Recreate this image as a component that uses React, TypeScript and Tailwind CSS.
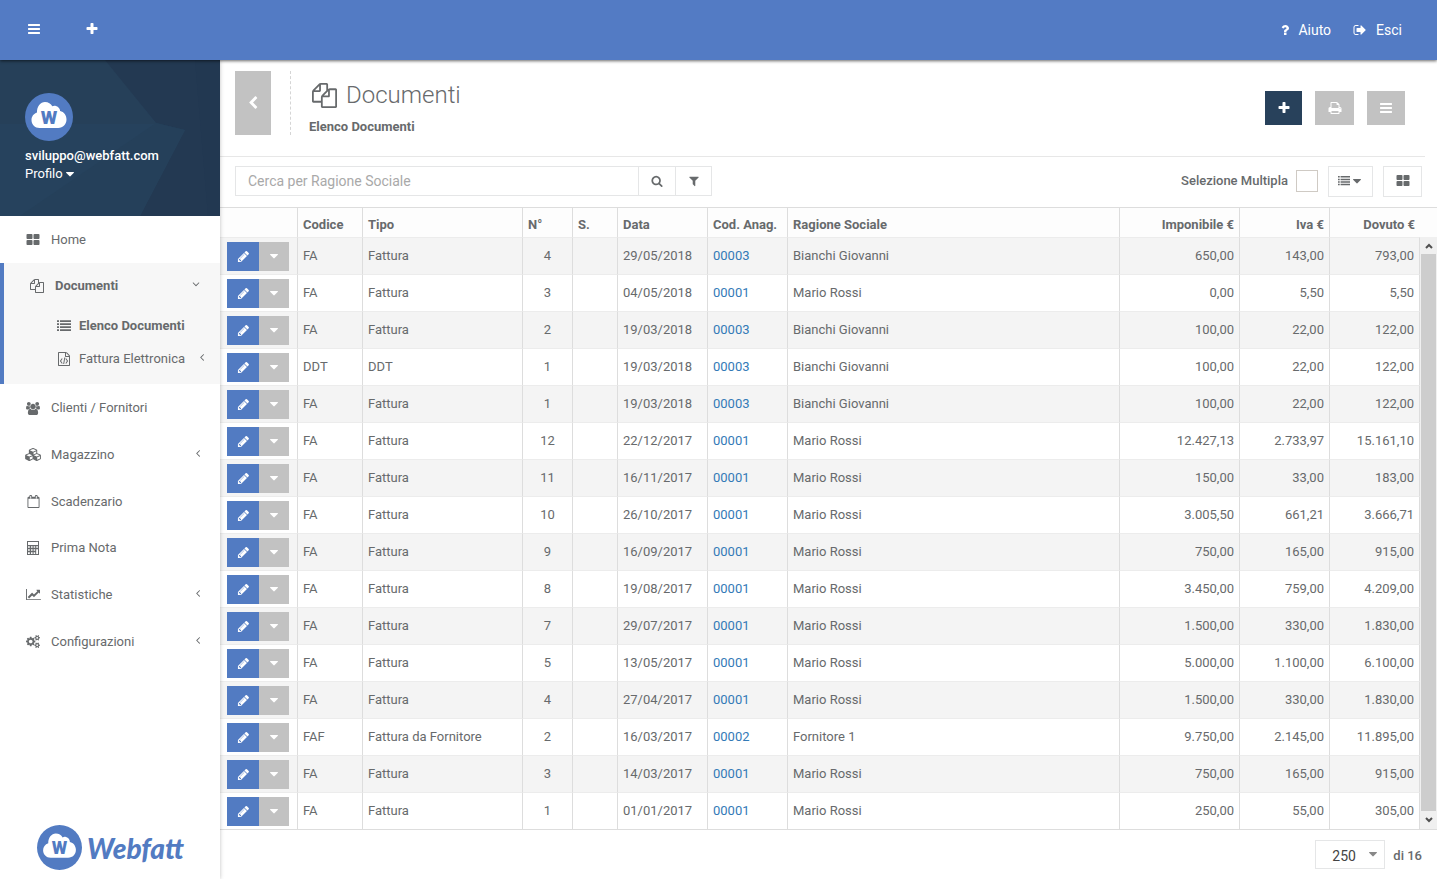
import React from "react";

const paths = {
  bars: "M1664 1344v128q0 26-19 45t-45 19h-1408q-26 0-45-19t-19-45v-128q0-26 19-45t45-19h1408q26 0 45 19t19 45zm0-512v128q0 26-19 45t-45 19h-1408q-26 0-45-19t-19-45v-128q0-26 19-45t45-19h1408q26 0 45 19t19 45zm0-512v128q0 26-19 45t-45 19h-1408q-26 0-45-19t-19-45v-128q0-26 19-45t45-19h1408q26 0 45 19t19 45z",
  plus: "M1600 736v192q0 40-28 68t-68 28h-416v416q0 40-28 68t-68 28h-192q-40 0-68-28t-28-68v-416h-416q-40 0-68-28t-28-68v-192q0-40 28-68t68-28h416v-416q0-40 28-68t68-28h192q40 0 68 28t28 68v416h416q40 0 68 28t28 68z",
  files: "M1696 384q40 0 68 28t28 68v1216q0 40-28 68t-68 28h-960q-40 0-68-28t-28-68v-288h-544q-40 0-68-28t-28-68v-672q0-40 20-88t48-76l408-408q28-28 76-48t88-20h416q40 0 68 28t28 68v328q68-40 128-40h416zm-544 213l-299 299h299v-299zm-640-384l-299 299h299v-299zm196 647l316-316v-416h-384v416q0 40-28 68t-68 28h-416v640h512v-256q0-40 20-88t48-76zm956 804v-1152h-384v416q0 40-28 68t-68 28h-416v640h896z",
  pencil: "M491 1536l91-91-235-235-91 91v107h128v128h107zm523-928q0-22-22-22-10 0-17 7l-542 542q-7 7-7 17 0 22 22 22 10 0 17-7l542-542q7-7 7-17zm-54-192l416 416-832 832h-416v-416zm683 96q0 53-37 90l-166 166-416-416 166-165q36-38 90-38 53 0 91 38l235 234q37 39 37 91z",
  thLarge: "M832 1024v384q0 52-38 90t-90 38h-512q-52 0-90-38t-38-90v-384q0-52 38-90t90-38h512q52 0 90 38t38 90zm0-768v384q0 52-38 90t-90 38h-512q-52 0-90-38t-38-90v-384q0-52 38-90t90-38h512q52 0 90 38t38 90zm896 768v384q0 52-38 90t-90 38h-512q-52 0-90-38t-38-90v-384q0-52 38-90t90-38h512q52 0 90 38t38 90zm0-768v384q0 52-38 90t-90 38h-512q-52 0-90-38t-38-90v-384q0-52 38-90t90-38h512q52 0 90 38t38 90z",
  list: "M0 1312h256v224h-256zM0 928h256v224h-256zM0 544h256v224h-256zM0 160h256v224h-256zM384 1312h1408v224h-1408zM384 928h1408v224h-1408zM384 544h1408v224h-1408zM384 160h1408v224h-1408z",
  angleLeft: "M1203 544q0 13-10 23l-393 393 393 393q10 10 10 23t-10 23l-50 50q-10 10-23 10t-23-10l-466-466q-10-10-10-23t10-23l466-466q10-10 23-10t23 10l50 50q10 10 10 23z",
  angleDown: "M1395 736q0 13-10 23l-466 466q-10 10-23 10t-23-10l-466-466q-10-10-10-23t10-23l50-50q10-10 23-10t23 10l393 393 393-393q10-10 23-10t23 10l50 50q10 10 10 23z",
  chevronLeft: "M1427 301l-531 531 531 531q19 19 19 45t-19 45l-166 166q-19 19-45 19t-45-19l-742-742q-19-19-19-45t19-45l742-742q19-19 45-19t45 19l166 166q19 19 19 45t-19 45z",
  print: "M448 1536h896v-256h-896v256zm0-640h896v-384h-160q-40 0-68-28t-28-68v-160h-640v640zm1152 64q0-26-19-45t-45-19-45 19-19 45 19 45 45 19 45-19 19-45zm128 0v416q0 13-9.5 22.5t-22.5 9.5h-224v160q0 40-28 68t-68 28h-960q-40 0-68-28t-28-68v-160h-224q-13 0-22.5-9.5t-9.5-22.5v-416q0-79 56.5-135.5t135.5-56.5h64v-544q0-40 28-68t68-28h672q40 0 88 20t76 48l152 152q28 28 48 76t20 88v256h64q79 0 135.5 56.5t56.5 135.5z",
  search: "M1216 832q0-185-131.5-316.5t-316.5-131.5-316.5 131.5-131.5 316.5 131.5 316.5 316.5 131.5 316.5-131.5 131.5-316.5zm512 832q0 52-38 90t-90 38q-54 0-90-38l-343-342q-179 124-399 124-143 0-273.5-55.5t-225-150-150-225-55.5-273.5 55.5-273.5 150-225 225-150 273.5-55.5 273.5 55.5 225 150 150 225 55.5 273.5q0 220-124 399l343 343q37 37 37 90z",
  filter: "M1595 295q17 41-14 70l-493 493v742q0 42-39 59-13 5-25 5-27 0-45-19l-256-256q-19-19-19-45v-486l-493-493q-31-29-14-70 17-39 59-39h1280q42 0 59 39z",
  caret: "M1408 704q0 26-19 45l-448 448q-19 19-45 19t-45-19l-448-448q-19-19-19-45t19-45 45-19h896q26 0 45 19t19 45z",
  signOut: "M704 1440q0 4 1 20t.5 26.5-3 23.5-10 19.5-20.5 6.5h-320q-119 0-203.5-84.5t-84.5-203.5v-704q0-119 84.5-203.5t203.5-84.5h320q13 0 22.5 9.5t9.5 22.5q0 4 1 20t.5 26.5-3 23.5-10 19.5-20.5 6.5h-320q-66 0-113 47t-47 113v704q0 66 47 113t113 47h312l11.5 1 11.5 3 8 5.5 7 9 2 13.5zm928-544q0 26-19 45l-544 544q-19 19-45 19t-45-19-19-45v-288h-448q-26 0-45-19t-19-45v-384q0-26 19-45t45-19h448v-288q0-26 19-45t45-19 45 19l544 544q19 19 19 45z",
  question: "M1088 1256v240q0 16-12 28t-28 12h-240q-16 0-28-12t-12-28v-240q0-16 12-28t28-12h240q16 0 28 12t12 28zm316-600q0 54-15.5 101t-35 76.5-55 59.5-57.5 43.5-61 35.5q-41 23-68.5 65t-27.5 67q0 17-12 32.5t-28 15.5h-240q-15 0-25.5-18.5t-10.5-37.5v-45q0-83 65-156.5t143-108.5q59-27 84-56t25-76q0-42-46.5-74t-107.5-32q-65 0-108 29-35 25-107 115-13 16-31 16-12 0-25-8l-164-125q-13-10-15.5-25t5.5-28q160-266 464-266 80 0 161 31t146 83 106 127.5 41 158.5z",
  calendar: "M192 1664h1408v-1152h-1408v1152zm384-1216v-288q0-14-9-23t-23-9h-64q-14 0-23 9t-9 23v288q0 14 9 23t23 9h64q14 0 23-9t9-23zm768 0v-288q0-14-9-23t-23-9h-64q-14 0-23 9t-9 23v288q0 14 9 23t23 9h64q14 0 23-9t9-23zm384-64v1280q0 52-38 90t-90 38h-1408q-52 0-90-38t-38-90v-1280q0-52 38-90t90-38h128v-96q0-66 47-113t113-47h64q66 0 113 47t47 113v96h384v-96q0-66 47-113t113-47h64q66 0 113 47t47 113v96h128q52 0 90 38t38 90z",
  chart: "M2048 1536v128h-2048v-1536h128v1408h1920zm-128-1248v435q0 21-19.5 29.5t-35.5-7.5l-121-121-633 633q-10 10-23 10t-23-10l-233-233-416 416-192-192 585-585q10-10 23-10t23 10l233 233 464-464-121-121q-16-16-7.5-35.5t29.5-19.5h435q14 0 23 9t9 23z",
  users: "M593 896q-162 5-265 128h-134q-82 0-138-40.5t-56-118.5q0-353 124-353 6 0 43.5 21t97.5 42.5 119 21.5q67 0 133-23-5 37-5 66 0 139 81 256zm1071 637q0 120-73 189.5t-194 69.5h-874q-121 0-194-69.5t-73-189.5q0-53 3.5-103.5t14-109 26.5-108.5 43-97.5 62-81 85.5-53.5 111.5-20q10 0 43 21.5t73 48 107 48 135 21.5 135-21.5 107-48 73-48 43-21.5q61 0 111.5 20t85.5 53.5 62 81 43 97.5 26.5 108.5 14 109 3.5 103.5zm-1024-1277q0 106-75 181t-181 75-181-75-75-181 75-181 181-75 181 75 75 181zm704 384q0 159-112.5 271.5t-271.5 112.5-271.5-112.5-112.5-271.5 112.5-271.5 271.5-112.5 271.5 112.5 112.5 271.5zm576 225q0 78-56 118.5t-138 40.5h-134q-103-123-265-128 81-117 81-256 0-29-5-66 66 23 133 23 59 0 119-21.5t97.5-42.5 43.5-21q124 0 124 353zm-128-609q0 106-75 181t-181 75-181-75-75-181 75-181 181-75 181 75 75 181z",
  cubes: "M640 1632l384-192v-314l-384 164v342zm-64-454l404-173-404-173-404 173zm1088 454l384-192v-314l-384 164v342zm-64-454l404-173-404-173-404 173zm-448-293l384-165v-266l-384 164v267zm-64-379l441-189-441-189-441 189zm1088 518v416q0 36-19 67t-52 47l-448 224q-25 14-57 14t-57-14l-448-224q-4-2-7-4-2 2-7 4l-448 224q-25 14-57 14t-57-14l-448-224q-33-16-52-47t-19-67v-416q0-38 21.5-70t56.5-48l434-186v-400q0-38 21.5-70t56.5-48l448-192q23-10 50-10t50 10l448 192q35 16 56.5 48t21.5 70v400l434 186q36 16 57 48t21 70z",
  cogs: "M896 896q0-106-75-181t-181-75-181 75-75 181 75 181 181 75 181-75 75-181zm768 512q0-52-38-90t-90-38-90 38-38 90q0 53 37.5 90.5t90.5 37.5 90.5-37.5 37.5-90.5zm0-1024q0-52-38-90t-90-38-90 38-38 90q0 53 37.5 90.5t90.5 37.5 90.5-37.5 37.5-90.5zm-384 421v185q0 10-7 19.5t-16 10.5l-155 24q-11 35-32 76 34 48 90 115 7 11 7 20 0 12-7 19-23 30-82.5 89.5t-78.5 59.5q-11 0-21-7l-115-90q-37 19-77 31-11 108-23 155-7 24-30 24h-186q-11 0-20-7.5t-10-17.5l-23-153q-34-10-75-31l-118 89q-7 7-20 7-11 0-21-8-144-133-144-160 0-9 7-19 10-14 41-53t47-61q-23-44-35-82l-152-24q-10-1-17-9.5t-7-19.5v-185q0-10 7-19.5t16-10.5l155-24q11-35 32-76-34-48-90-115-7-11-7-20 0-12 7-20 22-30 82-89t79-59q11 0 21 7l115 90q34-18 77-32 11-108 23-154 7-24 30-24h186q11 0 20 7.5t10 17.5l23 153q34 10 75 31l118-89q8-7 20-7 11 0 21 8 144 133 144 160 0 8-7 19-12 16-42 54t-45 60q23 48 34 82l152 23q10 2 17 10.5t7 19.5zm640 533v140q0 16-149 31-12 27-30 52 51 113 51 138 0 4-4 7-122 71-124 71-8 0-46-47t-52-68q-20 2-30 2t-30-2q-14 21-52 68t-46 47q-2 0-124-71-4-3-4-7 0-25 51-138-18-25-30-52-149-15-149-31v-140q0-16 149-31 13-29 30-52-51-113-51-138 0-4 4-7 4-2 35-20t59-34 30-16q8 0 46 46.5t52 67.5q20-2 30-2t30 2q51-71 92-112l6-2q4 0 124 70 4 3 4 7 0 25-51 138 17 23 30 52 149 15 149 31zm0-1024v140q0 16-149 31-12 27-30 52 51 113 51 138 0 4-4 7-122 71-124 71-8 0-46-47t-52-68q-20 2-30 2t-30-2q-14 21-52 68t-46 47q-2 0-124-71-4-3-4-7 0-25 51-138-18-25-30-52-149-15-149-31v-140q0-16 149-31 13-29 30-52-51-113-51-138 0-4 4-7 4-2 35-20t59-34 30-16q8 0 46 46.5t52 67.5q20-2 30-2t30 2q51-71 92-112l6-2q4 0 124 70 4 3 4 7 0 25-51 138 17 23 30 52 149 15 149 31z",
  fileCode: "M1596 380q28 28 48 76t20 88v1152q0 40-28 68t-68 28h-1344q-40 0-68-28t-28-68v-1600q0-40 28-68t68-28h896q40 0 88 20t76 48zm-444-244v376h376q-10-29-22-41l-313-313q-12-12-41-22zm384 1528v-1024h-416q-40 0-68-28t-28-68v-416h-768v1536h1280zM620 800l100 76-200 276 200 276-100 76-256-352zM1172 800l-100 76 200 276-200 276 100 76 256-352zM930 690l126 20-138 834-126-20z",
};

const wideBoxes: Partial<Record<keyof typeof paths, string>> = {
  chart: "0 0 2048 1792",
  users: "0 0 1920 1792",
  cubes: "0 0 2304 1792",
  cogs: "0 0 1920 1792",
};

function Icon({ name, className = "size-3.5" }: { name: keyof typeof paths; className?: string }) {
  return (
    <svg
      viewBox={wideBoxes[name] ?? "0 0 1792 1792"}
      className={`${className} shrink-0`}
      fill="currentColor"
      fillRule={name === "calendar" ? "evenodd" : "nonzero"}
      aria-hidden="true"
    >
      <path d={paths[name]} />
    </svg>
  );
}

function Calculator() {
  return (
    <svg viewBox="0 0 14 14" className="size-3.5" aria-hidden="true">
      <path
        fill="currentColor"
        fillRule="evenodd"
        d="M1 0h12v14H1zM2 1v3h10V1zM2 5.2v1.6h1.8V5.2zM5 5.2v1.6h1.6V5.2zM7.6 5.2v1.6h1.6V5.2zM10.2 5.2v1.6H12V5.2zM2 8.2v1.6h1.8V8.2zM5 8.2v1.6h1.6V8.2zM7.6 8.2v1.6h1.6V8.2zM10.2 8.2V13H12V8.2zM2 11.2V13h1.8v-1.8zM5 11.2V13h1.6v-1.8zM7.6 11.2V13h1.6v-1.8z"
      />
    </svg>
  );
}

function LogoMark({ className }: { className: string }) {
  return (
    <svg viewBox="0 0 48 48" className={className} aria-hidden="true">
      <circle cx="24" cy="24" r="24" fill="#527bc2" />
      <path
        fill="#fff"
        d="M14.5 35C10 35 6.5 31.500 6.500 27c0-3.600 2.200-6.500 5.500-7.600C11.800 13.500 15.500 9 20 9c3.300 0 5.900 1.700 7.300 4.300 1.200-.7 2.300-.8 3.700-.4 2.500.7 4 2.600 4.100 5.100C39 18.800 41.500 22.500 41.500 26.500c0 4.800-3.500 8.500-8.300 8.500z"
      />
      <text x="24" y="31" textAnchor="middle" fontSize="19" className="fill-[#527bc2] font-['Roboto',sans-serif] font-black">
        W
      </text>
    </svg>
  );
}

const menu = [
  { label: "Clienti / Fornitori", icon: <Icon name="users" className="h-[13px] w-3.5" />, more: false },
  { label: "Magazzino", icon: <Icon name="cubes" className="h-[13px] w-[17px]" />, more: true },
  { label: "Scadenzario", icon: <Icon name="calendar" className="size-[13px]" />, more: false },
  { label: "Prima Nota", icon: <Calculator />, more: false },
  { label: "Statistiche", icon: <Icon name="chart" className="h-[13px] w-[15px]" />, more: true },
  { label: "Configurazioni", icon: <Icon name="cogs" className="h-[13px] w-3.5" />, more: true },
];

function Sidebar() {
  return (
    <aside className="z-10 flex w-[220px] shrink-0 flex-col bg-white shadow-[0_0_4px_rgba(0,0,0,0.25)]">
      <div className="relative h-[156px] overflow-hidden bg-[#26425d] pl-[25px] pt-[33px] text-white">
        <svg viewBox="0 0 220 156" preserveAspectRatio="none" className="absolute inset-0 size-full" aria-hidden="true">
          <path fill="#264059" d="M0 0h106l50 64H0z" />
          <path fill="#233952" d="M105 0h115v156h-80l45-86-29-7z" />
          <path fill="#25405a" d="M156 63l29 7-45 86H20z" />
          <path fill="#213850" d="M195 0h25v156h-12z" opacity="0.4" />
        </svg>
        <div className="relative">
          <LogoMark className="size-12" />
          <div className="mt-[6px] leading-[18px]">
            <div className="font-medium">sviluppo@webfatt.com</div>
            <a href="#profilo" className="flex items-center">
              Profilo
              <Icon name="caret" className="size-3.5" />
            </a>
          </div>
        </div>
      </div>
      <nav>
        <a href="#home" className="flex h-[47px] items-center pl-[25px]">
          <span className="flex w-4 justify-center"><Icon name="thLarge" /></span>
          <span className="ml-2.5">Home</span>
        </a>
        <div className="h-[121px] border-l-4 border-[#527bc2] bg-[#f7f7f7]">
          <a href="#documenti" className="flex h-[45px] items-center pl-[26px] pr-[18px] font-bold">
            <Icon name="files" />
            <span className="ml-[11px]">Documenti</span>
            <Icon name="angleDown" className="mb-1 ml-auto size-3" />
          </a>
          <div className="pt-px">
            <a href="#elenco" className="flex h-[33px] items-center pl-[53px] font-bold">
              <Icon name="list" />
              <span className="ml-2">Elenco Documenti</span>
            </a>
            <a href="#elettronica" className="flex h-[33px] items-center pl-[53px] pr-3">
              <Icon name="fileCode" />
              <span className="ml-2">Fattura Elettronica</span>
              <Icon name="angleLeft" className="mb-1 ml-auto size-3" />
            </a>
          </div>
        </div>
        <div className="grid h-[281px] grid-rows-6 pt-px">
          {menu.map((m) => (
            <a key={m.label} href="#menu" className="flex items-center pl-[25px] pr-4">
              <span className="flex w-4 justify-center">{m.icon}</span>
              <span className="ml-2.5">{m.label}</span>
              {m.more && <Icon name="angleLeft" className="mb-1 ml-auto size-3" />}
            </a>
          ))}
        </div>
      </nav>
      <div className="mt-auto flex items-center gap-[5px] pb-[9px] pl-[37px]">
        <LogoMark className="size-[45px]" />
        <span className="font-['Lato',sans-serif] text-[28px] leading-8 font-black text-[#527bc2] italic">Webfatt</span>
      </div>
    </aside>
  );
}

const rows = [
  ["FA", "Fattura", "4", "29/05/2018", "00003", "Bianchi Giovanni", "650,00", "143,00", "793,00"],
  ["FA", "Fattura", "3", "04/05/2018", "00001", "Mario Rossi", "0,00", "5,50", "5,50"],
  ["FA", "Fattura", "2", "19/03/2018", "00003", "Bianchi Giovanni", "100,00", "22,00", "122,00"],
  ["DDT", "DDT", "1", "19/03/2018", "00003", "Bianchi Giovanni", "100,00", "22,00", "122,00"],
  ["FA", "Fattura", "1", "19/03/2018", "00003", "Bianchi Giovanni", "100,00", "22,00", "122,00"],
  ["FA", "Fattura", "12", "22/12/2017", "00001", "Mario Rossi", "12.427,13", "2.733,97", "15.161,10"],
  ["FA", "Fattura", "11", "16/11/2017", "00001", "Mario Rossi", "150,00", "33,00", "183,00"],
  ["FA", "Fattura", "10", "26/10/2017", "00001", "Mario Rossi", "3.005,50", "661,21", "3.666,71"],
  ["FA", "Fattura", "9", "16/09/2017", "00001", "Mario Rossi", "750,00", "165,00", "915,00"],
  ["FA", "Fattura", "8", "19/08/2017", "00001", "Mario Rossi", "3.450,00", "759,00", "4.209,00"],
  ["FA", "Fattura", "7", "29/07/2017", "00001", "Mario Rossi", "1.500,00", "330,00", "1.830,00"],
  ["FA", "Fattura", "5", "13/05/2017", "00001", "Mario Rossi", "5.000,00", "1.100,00", "6.100,00"],
  ["FA", "Fattura", "4", "27/04/2017", "00001", "Mario Rossi", "1.500,00", "330,00", "1.830,00"],
  ["FAF", "Fattura da Fornitore", "2", "16/03/2017", "00002", "Fornitore 1", "9.750,00", "2.145,00", "11.895,00"],
  ["FA", "Fattura", "3", "14/03/2017", "00001", "Mario Rossi", "750,00", "165,00", "915,00"],
  ["FA", "Fattura", "1", "01/01/2017", "00001", "Mario Rossi", "250,00", "55,00", "305,00"],
];

const cell = "border-r border-t border-r-[#ddd] border-t-[#ececec] px-[5px] py-0 whitespace-nowrap";
const head = "border-r border-t border-[#ddd] px-[5px] pt-1 pb-0 text-left font-bold whitespace-nowrap";

function DocumentTable() {
  return (
    <div className="flex border-b border-[#ddd]">
      <table className="min-w-0 flex-1 table-fixed border-separate border-spacing-0">
        <colgroup>
          <col className="w-[78px]" />
          <col className="w-[65px]" />
          <col className="w-[160px]" />
          <col className="w-[50px]" />
          <col className="w-[45px]" />
          <col className="w-[90px]" />
          <col className="w-[80px]" />
          <col />
          <col className="w-[120px]" />
          <col className="w-[90px]" />
          <col className="w-[90px]" />
        </colgroup>
        <thead className="bg-[#fdfdfd]">
          <tr className="h-[30px]">
            <th className={head} aria-label="Azioni" />
            <th className={head}>Codice</th>
            <th className={head}>Tipo</th>
            <th className={head}>N°</th>
            <th className={head}>S.</th>
            <th className={head}>Data</th>
            <th className={head}>Cod. Anag.</th>
            <th className={head}>Ragione Sociale</th>
            <th className={head}><div className="text-right">Imponibile €</div></th>
            <th className={head}><div className="text-right">Iva €</div></th>
            <th className="border-t border-[#ddd] px-[5px] pt-1 pb-0 text-right font-bold">Dovuto €</th>
          </tr>
        </thead>
        <tbody>
          {rows.map(([code, type, n, date, anag, name, net, vat, due], i) => (
            <tr key={i} className="h-[37px] odd:bg-[#f4f4f4] even:bg-white">
              <td className={cell}>
                <div className="flex pl-0.5 text-white">
                  <button type="button" aria-label="Modifica" className="flex h-[29px] w-8 items-center justify-center bg-[#527bc2]">
                    <Icon name="pencil" className="size-[13px]" />
                  </button>
                  <button type="button" aria-label="Altre azioni" className="flex h-[29px] w-[30px] items-center justify-center bg-[#c2c2c2]">
                    <Icon name="caret" />
                  </button>
                </div>
              </td>
              <td className={cell}>{code}</td>
              <td className={cell}>{type}</td>
              <td className={cell}><div className="text-center">{n}</div></td>
              <td className={cell} />
              <td className={cell}>{date}</td>
              <td className={cell}><a href="#anagrafica" className="text-[#337ab7]">{anag}</a></td>
              <td className={cell}>{name}</td>
              <td className={cell}><div className="text-right">{net}</div></td>
              <td className={cell}><div className="text-right">{vat}</div></td>
              <td className={cell}><div className="text-right">{due}</div></td>
            </tr>
          ))}
        </tbody>
      </table>
      <div className="flex w-[17px] shrink-0 flex-col">
        <div className="h-[30px] border-t border-[#ddd] bg-[#fdfdfd]" />
        <div className="flex flex-1 flex-col bg-[#f0f0f0] text-[#505050]">
          <div className="flex h-[17px] items-center justify-center">
            <svg viewBox="0 0 8 6" className="h-1.5 w-2" aria-hidden="true"><path d="M1 5l3-3 3 3" fill="none" stroke="currentColor" strokeWidth="2" /></svg>
          </div>
          <div className="mx-px flex-1 bg-[#cdcdcd]" />
          <div className="flex h-[18px] items-center justify-center">
            <svg viewBox="0 0 8 6" className="h-1.5 w-2" aria-hidden="true"><path d="M1 1l3 3 3-3" fill="none" stroke="currentColor" strokeWidth="2" /></svg>
          </div>
        </div>
      </div>
    </div>
  );
}

export default function App() {
  return (
    <div className="flex min-h-screen flex-col bg-white font-['Roboto',sans-serif] text-[13px] leading-[18px] text-[#676a6c]">
      <header className="z-20 flex h-[60px] items-center bg-[#537bc4] pr-[35px] pl-[27px] text-sm text-white shadow-[0_1px_3px_rgba(0,0,0,0.6)]">
        <div className="flex gap-11 pb-0.5">
          <button type="button" aria-label="Menu"><Icon name="bars" /></button>
          <button type="button" aria-label="Nuovo"><Icon name="plus" /></button>
        </div>
        <a href="#aiuto" className="ml-auto flex items-center gap-1.5">
          <Icon name="question" />
          Aiuto
        </a>
        <a href="#esci" className="ml-[22px] flex items-center gap-[9px]">
          <Icon name="signOut" />
          Esci
        </a>
      </header>
      <div className="flex flex-1">
        <Sidebar />
        <main className="min-w-0 flex-1">
          <div className="mr-3 flex h-[97px] border-b border-[#e7e7e7] pt-[11px] pr-5 pl-[15px]">
            <button type="button" aria-label="Indietro" className="flex h-16 w-9 items-center justify-center bg-[#c2c2c2] text-white">
              <Icon name="chevronLeft" />
            </button>
            <div className="ml-[19px] h-16 border-l border-dashed border-[#d5d5d5] pl-[18px]">
              <h1 className="flex h-12 items-center gap-[9px] pl-[3px] text-2xl font-light">
                <Icon name="files" className="size-[25px]" />
                Documenti
              </h1>
              <div className="-mt-px font-bold">Elenco Documenti</div>
            </div>
            <div className="mt-5 ml-auto flex h-[34px] gap-[13px] text-white">
              <button type="button" aria-label="Aggiungi" className="flex w-[37px] items-center justify-center bg-[#28415b]"><Icon name="plus" /></button>
              <button type="button" aria-label="Stampa" className="flex w-[39px] items-center justify-center bg-[#c2c2c2]"><Icon name="print" /></button>
              <button type="button" aria-label="Opzioni" className="flex w-[38px] items-center justify-center bg-[#c2c2c2]"><Icon name="bars" /></button>
            </div>
          </div>
          <div className="flex h-[50px] items-center pr-[15px] pb-[2px] pl-[15px]">
            <input
              type="search"
              aria-label="Cerca per Ragione Sociale"
              placeholder="Cerca per Ragione Sociale"
              className="h-[30px] w-[404px] border border-[#e5e6e7] px-3 text-sm outline-none placeholder:text-[#a9a9a9]"
            />
            <button type="button" aria-label="Cerca" className="-ml-px flex h-[30px] w-[38px] items-center justify-center border border-[#e5e6e7]"><Icon name="search" className="size-3" /></button>
            <button type="button" aria-label="Filtra" className="-ml-px flex h-[30px] w-[37px] items-center justify-center border border-[#e5e6e7]"><Icon name="filter" className="size-3" /></button>
            <label htmlFor="multi" className="ml-auto font-medium">Selezione Multipla</label>
            <input id="multi" type="checkbox" className="ml-2 size-[22px] appearance-none border border-[#cfcac4] bg-white" />
            <button type="button" aria-label="Vista elenco" className="ml-2.5 flex h-[31px] w-[45px] items-center justify-center border border-[#e5e6e7]">
              <Icon name="list" className="size-3" />
              <Icon name="caret" />
            </button>
            <button type="button" aria-label="Vista griglia" className="ml-2.5 flex h-[31px] w-[39px] items-center justify-center border border-[#e5e6e7]"><Icon name="thLarge" /></button>
          </div>
          <DocumentTable />
          <div className="flex items-center gap-2 py-2.5 pr-[15px]">
            <div className="relative ml-auto">
              <select id="page-size" className="h-[29px] w-[70px] appearance-none border border-[#e5e6e7] bg-white pt-0.5 pl-4 text-sm text-[#444]" defaultValue="250">
                <option>250</option>
              </select>
              <Icon name="caret" className="pointer-events-none absolute top-[7px] right-[5px] size-3.5 text-[#888]" />
            </div>
            <label htmlFor="page-size" className="pt-0.5 font-medium">di 16</label>
          </div>
        </main>
      </div>
    </div>
  );
}
